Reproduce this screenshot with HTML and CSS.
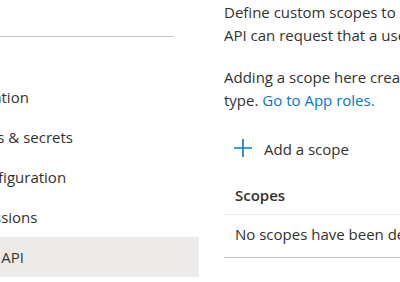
FILE: index.html
```html
<!DOCTYPE html>
<html lang="en">
<head>
    <meta charset="UTF-8">
    <title>Expose an API</title>
    <link rel="stylesheet" href="styles.css">
</head>
<body>
    <div class="page">
        <nav class="side">
            <div class="side-rule"></div>
            <ul class="side-list">
                <li class="side-item"><span class="side-label">Authentication</span></li>
                <li class="side-item"><span class="side-label">Certificates &amp; secrets</span></li>
                <li class="side-item"><span class="side-label">Token configuration</span></li>
                <li class="side-item"><span class="side-label">API permissions</span></li>
                <li class="side-item selected"><span class="side-label">Expose an API</span></li>
            </ul>
        </nav>

        <main class="content">
            <p class="intro">Define custom scopes to restrict access to data and functionality protected by the API. An application that requires access to parts of this<br>API can request that a user or admin consent to one or more of these.</p>
            <p class="intro">Adding a scope here creates only delegated permissions. If you are looking to create application-only scopes, use 'App roles' and define app roles assignable to application<br>type. <a href="#" class="link">Go to App roles.</a></p>

            <button class="add-btn">
                <svg class="add-icon" width="18" height="18" viewBox="0 0 18 18">
                    <path d="M9 0v18M0 9h18" stroke="#0078d4" stroke-width="1.6" fill="none"/>
                </svg>
                <span>Add a scope</span>
            </button>

            <div class="grid">
                <div class="grid-head">Scopes</div>
                <div class="grid-row">No scopes have been defined</div>
            </div>
        </main>
    </div>
</body>
</html>
```

FILE: styles.css
```css
body {
    margin: 0;
    font-family: "Open Sans", "Noto Sans", sans-serif;
    font-size: 15px;
    color: #323130;
    background: #fff;
    overflow: hidden;
}
.page {
    display: flex;
    width: 400px;
    height: 282px;
    overflow: hidden;
}
.side {
    width: 199px;
    flex-shrink: 0;
    overflow: hidden;
}
.side-rule {
    margin-top: 36px;
    width: 174px;
    height: 1px;
    background: #c8c6c4;
}
.side-list {
    list-style: none;
    margin: 40px 0 0;
    padding: 0;
}
.side-item {
    height: 40px;
    display: flex;
    align-items: center;
    white-space: nowrap;
}
.side-label {
    margin-left: -74px;
}
.selected { background: #edebe9; }

.content {
    flex: 1;
    min-width: 0;
    padding-left: 25px;
    white-space: nowrap;
}
.intro {
    margin: 1px 0 20px;
    line-height: 22.5px;
}
.link {
    color: #0078d4;
    text-decoration: none;
}
.add-btn {
    display: flex;
    align-items: center;
    gap: 12px;
    background: none;
    border: none;
    padding: 0 0 0 10px;
    height: 40px;
    margin-top: -2px;
    font: inherit;
    color: #323130;
}
.add-icon { margin-top: -2px; }
.grid {
    margin-top: 8px;
}
.grid-head {
    font-weight: 600;
    padding: 0 11px;
    height: 37px;
    line-height: 36px;
    border-bottom: 1px solid #edebe9;
}
.grid-row {
    padding: 0 11px;
    height: 42px;
    line-height: 38px;
    border-bottom: 1px solid #c8c6c4;
}
```
